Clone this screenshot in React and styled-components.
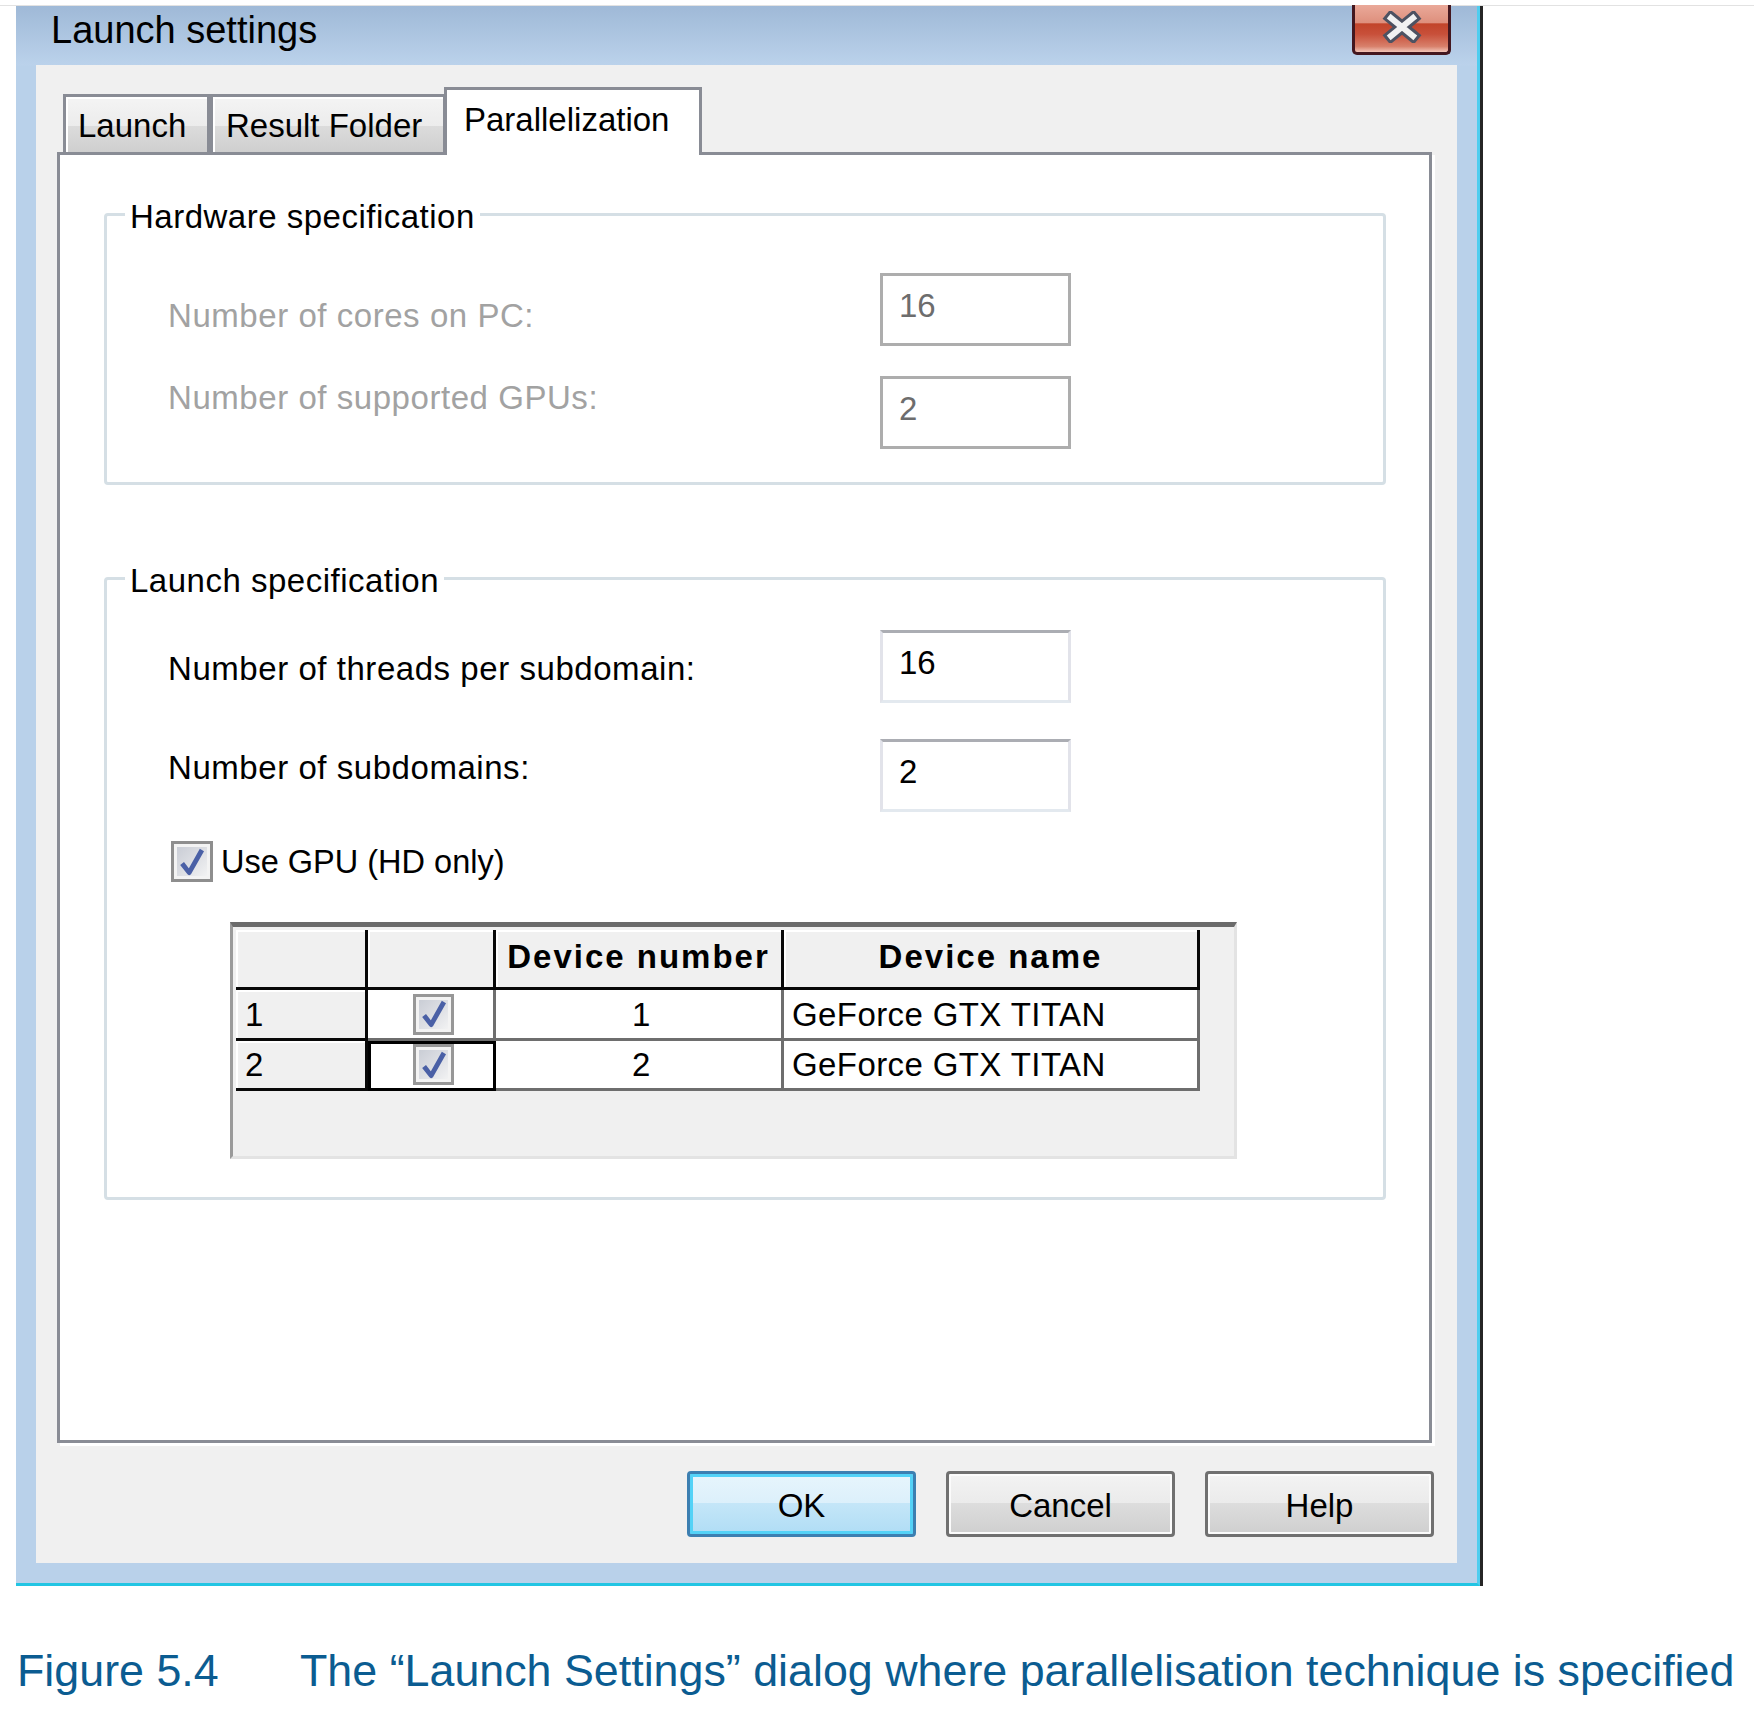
import styled, { createGlobalStyle, css } from "styled-components";

const GlobalStyle = createGlobalStyle`
  html, body {
    margin: 0;
    padding: 0;
    background: #fff;
  }
  body {
    font-family: "Liberation Sans", Arial, sans-serif;
    color: #000;
  }
`;

const hardwareRows = [
  { label: "Number of cores on PC:", value: "16", offset: 26 },
  { label: "Number of supported GPUs:", value: "2", offset: 5 },
];

const launchRows = [
  { label: "Number of threads per subdomain:", value: "16", offset: 22 },
  { label: "Number of subdomains:", value: "2", offset: 12 },
];

const devices = [
  { id: 1, name: "GeForce GTX TITAN" },
  { id: 2, name: "GeForce GTX TITAN", selected: true },
];

const CheckMark = () => (
  <svg width="34" height="34" viewBox="0 0 24 24">
    <path
      d="M5 13 L10 19.5 L19 3.5"
      fill="none"
      stroke="#4a60a6"
      strokeWidth="3.4"
      strokeLinejoin="round"
    />
  </svg>
);

const CloseGlyph = () => (
  <svg width="40" height="32" viewBox="0 0 40 32">
    <path d="M9 7 L31 25 M31 7 L9 25" stroke="#4d5262" strokeWidth="12" strokeLinecap="square" />
    <path d="M9 7 L31 25 M31 7 L9 25" stroke="#f2f2f2" strokeWidth="6" strokeLinecap="square" />
  </svg>
);

const App = () => {
  return (
    <Page>
      <GlobalStyle />
      <TopRule />
      <Window>
        <TitleBar>
          <Title>Launch settings</Title>
          <CloseButton>
            <CloseGlyph />
          </CloseButton>
        </TitleBar>
        <Client>
          <TabStrip>
            <Tab width={147} pad={12}>Launch</Tab>
            <Tab width={236} pad={13}>Result Folder</Tab>
            <Tab width={258} pad={17} active>
              Parallelization
            </Tab>
          </TabStrip>
          <TabPanel>
            <Group>
              <Legend>Hardware specification</Legend>
              <GroupBody top={40} bottom={33} gap={30}>
                {hardwareRows.map((row) => (
                  <FieldRow key={row.label}>
                    <FieldLabel offset={row.offset} disabled>
                      {row.label}
                    </FieldLabel>
                    <TextBox disabled>{row.value}</TextBox>
                  </FieldRow>
                ))}
              </GroupBody>
            </Group>
            <Group spaced>
              <Legend>Launch specification</Legend>
              <GroupBody top={33} bottom={38} gap={36}>
                {launchRows.map((row) => (
                  <FieldRow key={row.label}>
                    <FieldLabel offset={row.offset}>{row.label}</FieldLabel>
                    <TextBox>{row.value}</TextBox>
                  </FieldRow>
                ))}
                <CheckRow>
                  <CheckBox>
                    <CheckMark />
                  </CheckBox>
                  <CheckLabel>Use GPU (HD only)</CheckLabel>
                </CheckRow>
                <GridFrame>
                  <Grid>
                    <HeadCell />
                    <HeadCell />
                    <HeadCell>Device number</HeadCell>
                    <HeadCell>Device name</HeadCell>
                    {devices.map((d) => [
                      <RowHead key={`h${d.id}`}>{d.id}</RowHead>,
                      <Cell key={`c${d.id}`} center selected={d.selected}>
                        <CheckBox small>
                          <CheckMark />
                        </CheckBox>
                      </Cell>,
                      <Cell key={`n${d.id}`} center>
                        {d.id}
                      </Cell>,
                      <Cell key={`d${d.id}`}>{d.name}</Cell>,
                    ])}
                  </Grid>
                </GridFrame>
              </GroupBody>
            </Group>
          </TabPanel>
          <ButtonRow>
            <DialogButton primary>OK</DialogButton>
            <DialogButton>Cancel</DialogButton>
            <DialogButton>Help</DialogButton>
          </ButtonRow>
        </Client>
      </Window>
      <Caption>
        <FigNum>Figure 5.4</FigNum>
        <span>The “Launch Settings” dialog where parallelisation technique is specified</span>
      </Caption>
    </Page>
  );
};

const Page = styled.div`
  width: 1754px;
  min-height: 1717px;
  overflow: hidden;
`;
const TopRule = styled.div`
  height: 1px;
  margin-top: 5px;
  background: #e2e2e2;
`;
const Window = styled.div`
  margin-left: 16px;
  width: 1461px;
  background: linear-gradient(#9fb9d7 0, #bbd2eb 59px, #b9d1ea 60px);
  border-right: 3px solid #4fcdef;
  border-bottom: 3px solid #22c5e3;
  box-shadow: 3px 0 0 #262626;
`;
const TitleBar = styled.div`
  display: flex;
  justify-content: space-between;
  align-items: flex-start;
  height: 59px;
  padding-left: 35px;
`;
const Title = styled.div`
  font-size: 38px;
  line-height: 1;
  padding-top: 5px;
`;
const CloseButton = styled.div`
  box-sizing: border-box;
  width: 99px;
  height: 50px;
  margin-top: -1px;
  margin-right: 26px;
  border: 3px solid #43171f;
  border-top: none;
  border-radius: 0 0 5px 5px;
  background: linear-gradient(
    #eaa999 0%,
    #de8f7d 38%,
    #c2442a 40%,
    #c8503a 62%,
    #d8806b 88%,
    #f1c5b8 100%
  );
  display: flex;
  align-items: center;
  justify-content: center;
  padding-bottom: 4px;
`;
const Client = styled.div`
  margin: 0 20px 20px 20px;
  height: 1498px;
  background: #f0f0f0;
  display: flex;
  flex-direction: column;
`;
const TabStrip = styled.div`
  display: flex;
  align-items: flex-end;
  height: 65px;
  margin-top: 22px;
  padding-left: 27px;
`;
const Tab = styled.div`
  box-sizing: border-box;
  width: ${({ width }) => width}px;
  height: 58px;
  padding-left: ${({ pad }) => pad}px;
  padding-top: 12px;
  border: 3px solid #898c95;
  border-bottom: none;
  font-size: 33px;
  line-height: 1;
  white-space: nowrap;
  background: linear-gradient(#f4f4f4 0%, #ececec 52%, #dcdcdc 53%, #cfcfcf 100%);
  box-shadow: inset 2px 2px 0 #fff;
  ${({ active }) =>
    active &&
    css`
      position: relative;
      z-index: 1;
      height: 68px;
      margin-left: -2px;
      margin-bottom: -3px;
      padding-top: 13px;
      background: #fff;
      box-shadow: none;
    `}
`;
const TabPanel = styled.div`
  box-sizing: border-box;
  height: 1291px;
  margin: 0 25px 0 21px;
  padding: 41px 43px 0 44px;
  border: 3px solid #898c95;
  background: #fff;
  box-shadow: 3px 3px 0 #fff;
`;
const Group = styled.fieldset`
  margin: ${({ spaced }) => (spaced ? "75px" : "0")} 0 0;
  padding: 0;
  min-width: 0;
  border: 3px solid #d5dfe5;
  border-radius: 4px;
`;
const Legend = styled.legend`
  margin-left: 18px;
  padding: 4px 5px 0;
  font-size: 33px;
  line-height: 1;
  letter-spacing: 0.5px;
`;
const GroupBody = styled.div`
  display: flex;
  flex-direction: column;
  gap: ${({ gap }) => gap}px;
  padding: ${({ top }) => top}px 0 ${({ bottom }) => bottom}px 61px;
`;
const FieldRow = styled.div`
  display: flex;
  align-items: flex-start;
  height: 73px;
`;
const FieldLabel = styled.div`
  width: 712px;
  margin-top: ${({ offset }) => offset}px;
  font-size: 33px;
  line-height: 1;
  letter-spacing: 0.55px;
  color: ${({ disabled }) => (disabled ? "#a2a2a2" : "#000")};
`;
const TextBox = styled.div`
  box-sizing: border-box;
  width: 191px;
  height: 73px;
  padding: 13px 0 0 16px;
  border: 3px solid;
  border-color: ${({ disabled }) =>
    disabled ? "#adadad" : "#abadb3 #e2e3ea #e3e9ef #e2e3ea"};
  background: #fff;
  font-size: 33px;
  line-height: 1;
  color: ${({ disabled }) => (disabled ? "#6d6d6d" : "#000")};
`;
const CheckRow = styled.div`
  display: flex;
  align-items: flex-start;
  gap: 8px;
  margin-top: -7px;
  padding-left: 3px;
`;
const CheckBox = styled.div`
  box-sizing: border-box;
  width: ${({ small }) => (small ? 41 : 42)}px;
  height: 41px;
  border: 3px solid ${({ small }) => (small ? "#979797" : "#8e8e8e")};
  background: linear-gradient(135deg, #c6cad3 0%, #dcdee3 50%, #f6f6f6 100%);
  box-shadow: inset 0 0 0 3px #f3f3f3;
  display: flex;
  align-items: center;
  justify-content: center;
  overflow: hidden;
`;
const CheckLabel = styled.div`
  margin-top: 5px;
  font-size: 32.5px;
  line-height: 1;
`;
const GridFrame = styled.div`
  box-sizing: border-box;
  width: 1007px;
  height: 237px;
  margin: 4px 0 0 62px;
  padding: 3px 0 0 3px;
  border-style: solid;
  border-width: 5px 3px 3px 3px;
  border-color: #6b6b6b #e3e3e3 #e3e3e3 #9a9a9a;
  background: #f0f0f0;
`;
const Grid = styled.div`
  display: grid;
  grid-template-columns: 132px 128px 288px 416px;
  grid-template-rows: 60px 51px 50px;
`;
const cellBase = css`
  box-sizing: border-box;
  display: flex;
  align-items: center;
  font-size: 33px;
  line-height: 1;
  white-space: nowrap;
`;
const HeadCell = styled.div`
  ${cellBase}
  justify-content: center;
  padding-bottom: 4px;
  font-weight: bold;
  letter-spacing: 2px;
  background: #f0f0f0;
  border-right: 3px solid #080808;
  border-bottom: 3px solid #080808;
  box-shadow: inset 2px 2px 0 #fff;
`;
const RowHead = styled.div`
  ${cellBase}
  padding-left: 9px;
  background: #f0f0f0;
  border-right: 3px solid #080808;
  border-bottom: 3px solid #080808;
  box-shadow: inset 2px 2px 0 #fff;
`;
const Cell = styled.div`
  ${cellBase}
  justify-content: ${({ center }) => (center ? "center" : "flex-start")};
  padding-left: ${({ center }) => (center ? 6 : 8)}px;
  letter-spacing: 0.4px;
  background: #fff;
  border-right: 3px solid #6e6e6e;
  border-bottom: 3px solid #6e6e6e;
  ${({ selected }) =>
    selected &&
    css`
      border-color: #000;
      box-shadow: inset 3px 3px 0 #000;
    `}
`;
const ButtonRow = styled.div`
  display: flex;
  justify-content: flex-end;
  gap: 30px;
  margin: 28px 23px 0 0;
`;
const DialogButton = styled.div`
  box-sizing: border-box;
  width: 229px;
  height: 66px;
  padding-top: 2px;
  display: flex;
  align-items: center;
  justify-content: center;
  font-size: 33px;
  line-height: 1;
  border: 3px solid #707070;
  border-radius: 4px;
  background: linear-gradient(#f3f3f3 0%, #ebebeb 48%, #dddddd 49%, #cfcfcf 100%);
  box-shadow: inset 0 0 0 2px #fbfbfb;
  ${({ primary }) =>
    primary &&
    css`
      border-color: #3c7fb1;
      background: linear-gradient(#e7f5fc 0%, #dcf0fb 48%, #c4e6f8 49%, #b0ddf5 100%);
      box-shadow: inset 0 0 0 3px #53d2f7;
    `}
`;
const Caption = styled.div`
  display: flex;
  margin-top: 62px;
  padding-left: 17px;
  font-family: "Liberation Sans", Arial, sans-serif;
  font-size: 44.8px;
  line-height: 1;
  color: #0b5c91;
  white-space: nowrap;
`;
const FigNum = styled.span`
  width: 283px;
`;

export default App;
